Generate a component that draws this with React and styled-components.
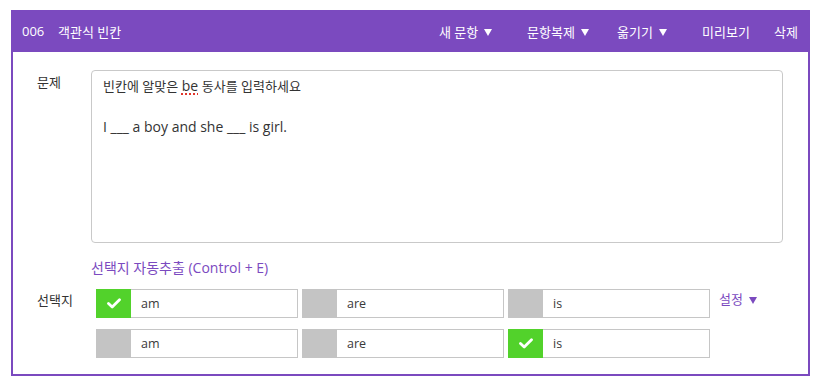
import React from "react";
import styled, { createGlobalStyle } from "styled-components";

const Global = createGlobalStyle`
  html, body { margin: 0; padding: 0; background: #fff; }
  body { font-family: "Open Sans", "Noto Sans CJK KR", sans-serif; color: #333; }
`;

const PURPLE = "#7b4abf";

const Page = styled.div`
  padding: 10px 11px 0 11px;
  width: 799px;
`;

const Frame = styled.div`
  border: 2px solid ${PURPLE};
  border-top: none;
`;

const Header = styled.div`
  display: flex;
  align-items: center;
  height: 42px;
  margin: 0 -2px;
  padding: 0 12px 0 11px;
  background: ${PURPLE};
  color: #fff;
  font-size: 13px;
`;

const Num = styled.span`
  width: 36px;
`;

const Title = styled.span`
  flex: 1;
`;

const Menu = styled.span`
  width: ${(p) => p.$w}px;
  white-space: nowrap;
  display: inline-flex;
  align-items: center;
`;

const Caret = styled.span`
  display: inline-block;
  width: 0;
  height: 0;
  margin-left: 6px;
  margin-top: 2px;
  border-left: 4px solid transparent;
  border-right: 4px solid transparent;
  border-top: 7px solid ${(p) => p.$color || "#fff"};
`;

const Body = styled.div`
  padding: 18px 24px 16px 24px;
  display: grid;
  grid-template-columns: 54px 1fr;
`;

const Label = styled.div`
  font-size: 13px;
  color: #333;
  padding-top: ${(p) => p.$top}px;
`;

const Editor = styled.div`
  height: 173px;
  box-sizing: border-box;
  border: 1px solid #c9c9c9;
  border-radius: 4px;
  padding: 5px 11px;
  margin-right: 1px;
  font-size: 14px;
  line-height: 20.5px;
  color: #333;
`;

const Line = styled.div`
  min-height: 20.5px;
`;

const Ko = styled.span`
  font-size: 13px;
`;

const Spell = styled.span`
  text-decoration: underline dotted #e0352b;
  text-decoration-thickness: 2px;
  text-underline-offset: 2px;
`;

const Extract = styled.div`
  grid-column: 2;
  margin-top: 15px;
  font-size: 14px;
  color: ${PURPLE};
  line-height: 20px;
`;

const ChoiceArea = styled.div`
  display: flex;
  align-items: flex-start;
  padding-left: 5px;
  margin-top: 11px;
`;

const ChoiceGrid = styled.div`
  display: grid;
  grid-template-columns: repeat(3, 202px);
  column-gap: 4px;
  row-gap: 11px;
`;

const Choice = styled.div`
  display: flex;
  height: 29px;
  box-sizing: border-box;
  border: 1px solid #c6c6c6;
  background: #fff;
`;

const Check = styled.div`
  width: 35px;
  margin: -1px 0 -1px -1px;
  background: ${(p) => (p.$on ? "#52d22b" : "#c4c4c4")};
  display: flex;
  align-items: center;
  justify-content: center;
`;

const ChoiceText = styled.div`
  display: flex;
  align-items: center;
  padding-left: 10px;
  font-size: 12.5px;
  color: #3a3a3a;
`;

const Settings = styled.div`
  margin-left: 9px;
  font-size: 13px;
  color: ${PURPLE};
  line-height: 20px;
  display: flex;
  align-items: center;
`;

const CheckIcon = () => (
  <svg width="14" height="11" viewBox="0 0 14 11">
    <path d="M1.5 5.5 L5.2 9 L12.5 1.8" fill="none" stroke="#fff" strokeWidth="2.8" strokeLinecap="round" strokeLinejoin="round" />
  </svg>
);

const choices = [
  { text: "am", on: true },
  { text: "are", on: false },
  { text: "is", on: false },
  { text: "am", on: false },
  { text: "are", on: false },
  { text: "is", on: true },
];

export default function App() {
  return (
    <Page>
      <Global />
      <Frame>
        <Header>
          <Num>006</Num>
          <Title>객관식 빈칸</Title>
          <Menu $w={88}>새 문항<Caret /></Menu>
          <Menu $w={90}>문항복제<Caret /></Menu>
          <Menu $w={85}>옮기기<Caret /></Menu>
          <Menu $w={72}>미리보기</Menu>
          <Menu $w={24}>삭제</Menu>
        </Header>
        <Body>
          <Label $top={2}>문제</Label>
          <Editor>
            <Line><Ko>빈칸에 알맞은</Ko> <Spell>be</Spell> <Ko>동사를 입력하세요</Ko></Line>
            <Line />
            <Line>I ___ a boy and she ___ is girl.</Line>
          </Editor>
          <Extract>선택지 자동추출 (Control + E)</Extract>
          <Label $top={12}>선택지</Label>
          <ChoiceArea>
            <ChoiceGrid>
              {choices.map((c, i) => (
                <Choice key={i}>
                  <Check $on={c.on}>{c.on && <CheckIcon />}</Check>
                  <ChoiceText>{c.text}</ChoiceText>
                </Choice>
              ))}
            </ChoiceGrid>
            <Settings>설정<Caret $color={PURPLE} /></Settings>
          </ChoiceArea>
        </Body>
      </Frame>
    </Page>
  );
}
